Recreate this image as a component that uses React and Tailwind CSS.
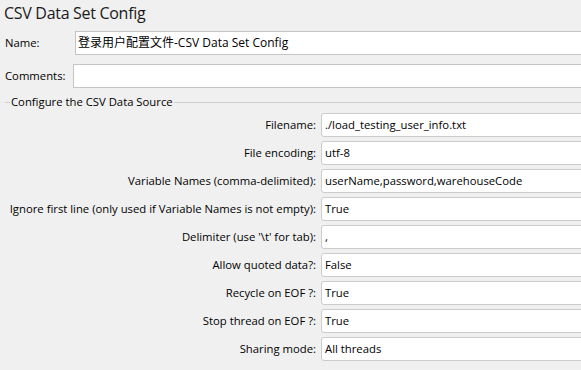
import React from "react";

const rows = [
  ["Filename:", "./load_testing_user_info.txt"],
  ["File encoding:", "utf-8"],
  ["Variable Names (comma-delimited):", "userName,password,warehouseCode"],
  ["Ignore first line (only used if Variable Names is not empty):", "True"],
  ["Delimiter (use '\\t' for tab):", ","],
  ["Allow quoted data?:", "False"],
  ["Recycle on EOF ?:", "True"],
  ["Stop thread on EOF ?:", "True"],
  ["Sharing mode:", "All threads"],
];

export default function App() {
  return (
    <div
      className="w-[581px] h-[370px] overflow-hidden bg-[#f0f0f0] text-black relative"
      style={{ fontFamily: '"Open Sans", "Noto Sans CJK SC", sans-serif' }}
    >
      <div className="h-[31px] pl-[4px] pt-[1px] text-[16px] tracking-[-0.3px] leading-[24px] text-[#1a1a1a]">
        CSV Data Set Config
      </div>
      <div className="flex items-center h-[24px]">
        <div className="w-[75px] pl-[5px] text-[11.3px]">Name:</div>
        <div className="flex-1 h-[24px] -mr-[10px] bg-white border border-[#c4c4c4] pl-[2px] text-[12px] leading-[22px] text-black whitespace-nowrap">
          登录用户配置文件-CSV Data Set Config
        </div>
      </div>
      <div className="flex items-center h-[24px] mt-[9px]">
        <div className="w-[73px] pl-[5px] text-[11.3px]">Comments:</div>
        <div className="flex-1 h-[24px] -mr-[10px] bg-white border border-[#c4c4c4]"></div>
      </div>
      <div className="flex items-center h-[26px] pl-[5px] mt-[1px]">
        <div className="w-[5px] h-px bg-[#d0d0d0]"></div>
        <div className="px-[1px] text-[11.3px] leading-[14px] whitespace-nowrap">
          Configure the CSV Data Source
        </div>
        <div className="flex-1 h-px bg-[#d0d0d0]"></div>
      </div>
      <div className="flex flex-col gap-[4px] mt-[-2px]">
        {rows.map(([label, value]) => (
          <div key={label} className="flex items-center h-[24px]">
            <div className="w-[317px] pr-[1px] text-right text-[11.3px] whitespace-nowrap">
              {label}
            </div>
            <div className="ml-[4px] flex-1 -mr-[10px] h-[24px] bg-white border border-[#cccccc] rounded-[3px] pl-[3px] text-[11.3px] leading-[22px] whitespace-nowrap">
              {value}
            </div>
          </div>
        ))}
      </div>
    </div>
  );
}
